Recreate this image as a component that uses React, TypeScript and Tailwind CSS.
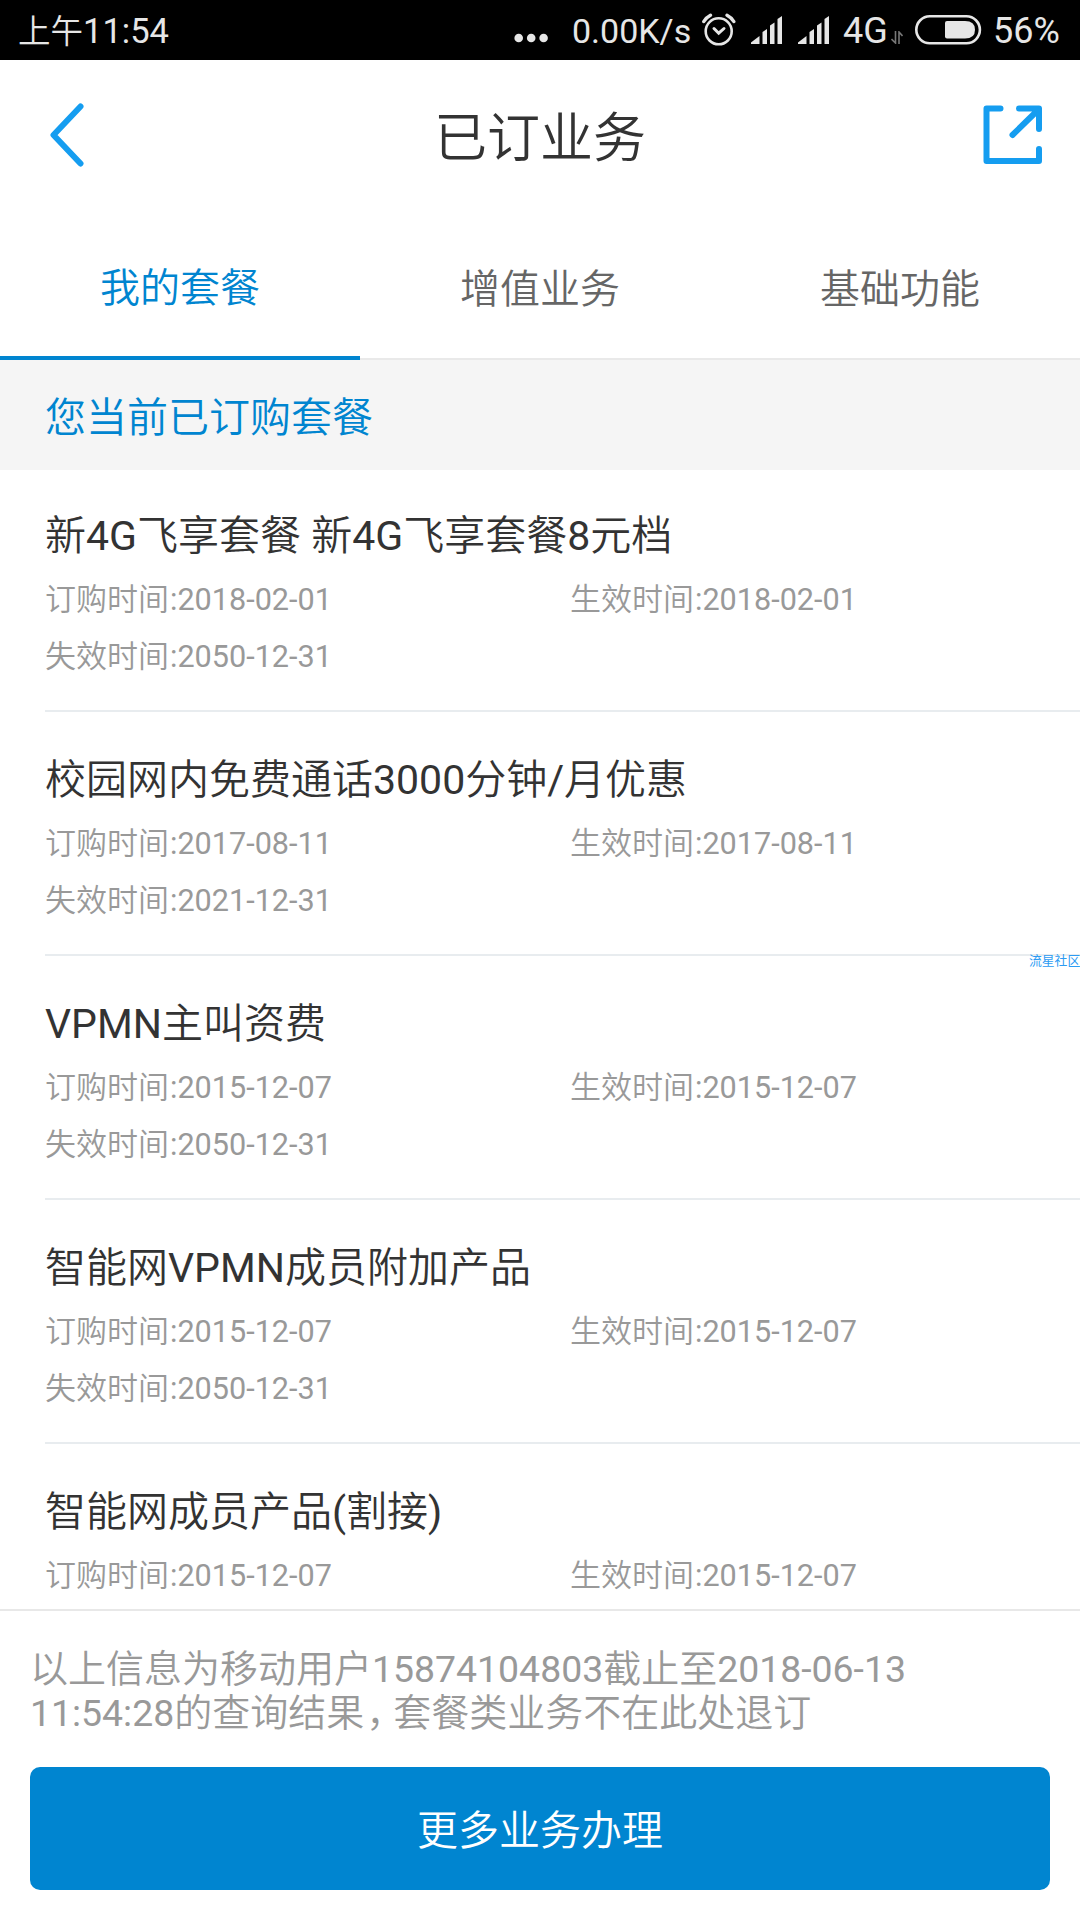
import type { ReactNode } from "react";

type Plan = { name: string; ordered: string; active: string; expires?: string };

const plans: Plan[] = [
  { name: "新4G飞享套餐 新4G飞享套餐8元档", ordered: "2018-02-01", active: "2018-02-01", expires: "2050-12-31" },
  { name: "校园网内免费通话3000分钟/月优惠", ordered: "2017-08-11", active: "2017-08-11", expires: "2021-12-31" },
  { name: "VPMN主叫资费", ordered: "2015-12-07", active: "2015-12-07", expires: "2050-12-31" },
  { name: "智能网VPMN成员附加产品", ordered: "2015-12-07", active: "2015-12-07", expires: "2050-12-31" },
  { name: "智能网成员产品(割接)", ordered: "2015-12-07", active: "2015-12-07" },
];

// Latin letters and digits keep the regular weight beside the lighter Chinese glyphs.
function Mixed({ text }: { text: string }) {
  return (
    <>
      {text.split(/([\x20-\x7e]+)/).map((part, i) =>
        i % 2 ? (
          <span key={i} className="font-normal">
            {part}
          </span>
        ) : (
          part
        ),
      )}
    </>
  );
}

function Signal({ className }: { className: string }) {
  return (
    <svg className={className} width="32" height="28" viewBox="0 0 32 28" fill="#e6e6e6">
      <path d="M0 28V26.500L8.500 20V28Z" />
      <path d="M11.500 28V16L16 13V28Z" />
      <path d="M19 28V9.500L23.500 6.500V28Z" />
      <path d="M26.500 28V3L31 0V28Z" />
    </svg>
  );
}

function StatusBar() {
  return (
    <div className="flex h-[60px] shrink-0 items-center bg-black text-[#e6e6e6]">
      <div className="ml-[18px] flex w-[496px] items-center whitespace-nowrap leading-[60px]">
        <span className="mt-[3px] text-[32.500px] font-[350]">上午</span>
        <span className="mt-[2px] text-[34.500px]">11:54</span>
      </div>
      <svg className="mt-[15px] w-[34px]" width="34" height="10" viewBox="0 0 34 10" fill="#e6e6e6">
        <circle cx="4.700" cy="5" r="4.300" />
        <circle cx="17.200" cy="5" r="4.300" />
        <circle cx="29.600" cy="5" r="4.300" />
      </svg>
      <span className="mt-[2px] ml-[24px] w-[130px] text-[34px] leading-[60px] whitespace-nowrap">0.00K/s</span>
      <svg width="34" height="34" viewBox="0 0 34 34" fill="none" stroke="#e6e6e6" strokeWidth="2.6" strokeLinecap="round">
        <circle cx="16.700" cy="18.300" r="13" />
        <path d="M12 15.500L16.700 20.200L22 15.500" strokeWidth="3" />
        <path d="M1.800 8.500Q4 4.500 8.500 2.200M25 2.200Q29.500 4.500 31.800 8.500" strokeWidth="3.400" />
      </svg>
      <Signal className="ml-[15px]" />
      <Signal className="ml-[15px]" />
      <span className="mt-[2px] ml-[13px] w-[48px] text-[36px] leading-[60px]">4G</span>
      <svg className="mt-[14px]" width="12" height="13" viewBox="0 0 12 13" fill="none" stroke="#777" strokeWidth="1.600">
        <path d="M4.500 0V12L0.500 8M8 13V1L11.500 5" />
      </svg>
      <svg className="ml-[12px]" width="67" height="30" viewBox="0 0 67 30">
        <rect x="1.300" y="1.300" width="63.600" height="27" rx="13.500" fill="none" stroke="#e6e6e6" strokeWidth="2.600" />
        <path d="M32 6H50Q60 6 60 14.700Q60 23.500 50 23.500H32Q30 23.500 30 21.500V8Q30 6 32 6Z" fill="#e6e6e6" />
      </svg>
      <span className="mt-[1px] ml-[11px] text-[36px] leading-[60px]">56%</span>
    </div>
  );
}

function Header() {
  return (
    <header className="flex h-[154px] shrink-0 items-center justify-between pr-[37px] pl-[49px]">
      <svg className="mt-[-5px]" width="60" height="64" viewBox="0 0 60 64" fill="none" stroke="#159df0" strokeWidth="6" strokeLinecap="round" strokeLinejoin="round">
        <path d="M31.500 3.500L4.500 32L31.500 60.500" />
      </svg>
      <h1 className="mt-[6px] -ml-[12px] text-[53px] font-[350] text-[#333]">已订业务</h1>
      <svg className="mt-[-5px]" width="60" height="60" viewBox="0 0 60 60" fill="none" stroke="#159df0" strokeWidth="6" strokeLinecap="round" strokeLinejoin="round">
        <path d="M17.500 3.500H3.500V56H56V44M36 3.500H56V24M29.500 30L54 6" />
      </svg>
    </header>
  );
}

function Tab({ active, children }: { active?: boolean; children: ReactNode }) {
  return (
    <div
      className={
        active
          ? "flex h-[146px] flex-1 items-center justify-center border-b-4 border-[#0085d0] pt-[7px] text-[#0085d0]"
          : "flex h-[146px] flex-1 items-center justify-center border-b-2 border-[#e9e9e9] pt-[7px] text-[#666]"
      }
    >
      <span className="text-[40px] font-[350]">{children}</span>
    </div>
  );
}

function Stamp({ label, date }: { label: string; date: string }) {
  return (
    <span>
      {label}
      <span className="ml-[1px] text-[30.600px] font-normal">:{date}</span>
    </span>
  );
}

export default function App() {
  return (
    <div className="flex h-[1920px] w-[1080px] flex-col overflow-hidden bg-white font-['Roboto','Noto_Sans_CJK_SC',sans-serif]">
      <StatusBar />
      <Header />
      <nav className="flex shrink-0">
        <Tab active>我的套餐</Tab>
        <Tab>增值业务</Tab>
        <Tab>基础功能</Tab>
      </nav>
      <div className="flex h-[110px] shrink-0 items-center bg-[#f5f5f5] pt-[7px] pl-[45px] text-[41px] font-[350] text-[#0085d0]">
        您当前已订购套餐
      </div>
      <main className="min-h-0 flex-1 overflow-hidden pl-[45px]">
        {plans.map((p) => (
          <section key={p.name} className="h-[244px] border-b-2 border-[#e8ecef] pt-[38px] first:h-[242px] first:pt-[36px]">
            <h2 className="text-[41px] leading-[60px] font-[350] text-[#333]">
              <Mixed text={p.name} />
            </h2>
            <div className="mt-[5px] grid grid-cols-[525px_1fr] text-[31px] leading-[57px] font-[350] text-[#999]">
              <Stamp label="订购时间" date={p.ordered} />
              <Stamp label="生效时间" date={p.active} />
              {p.expires && <Stamp label="失效时间" date={p.expires} />}
            </div>
          </section>
        ))}
      </main>
      <footer className="h-[311px] shrink-0 border-t-2 border-[#e8e8e8] px-[30px] pt-[36px]">
        <p className="text-[38px] leading-[44px] font-[350] text-[#999]">
          以上信息为移动用户<span className="text-[37.400px] font-normal">15874104803</span>截止至
          <span className="text-[37.400px] font-normal">2018-06-13</span>
          <br />
          <span className="text-[37.400px] font-normal">11:54:28</span>的查询结果
          <span className="ml-[2px] inline-block w-[27px] overflow-hidden align-top">，</span>套餐类业务不在此处退订
        </p>
        <button className="mt-[32px] flex h-[123px] w-full items-center justify-center rounded-[10px] bg-[#0085d0] pt-[7px] text-[41px] font-[350] text-white">
          更多业务办理
        </button>
      </footer>
      <span className="absolute top-[953px] left-[1029px] w-[51px] overflow-hidden text-[12.800px] leading-[15px] whitespace-nowrap text-[#2c9bf3]">
        流星社区
      </span>
    </div>
  );
}
